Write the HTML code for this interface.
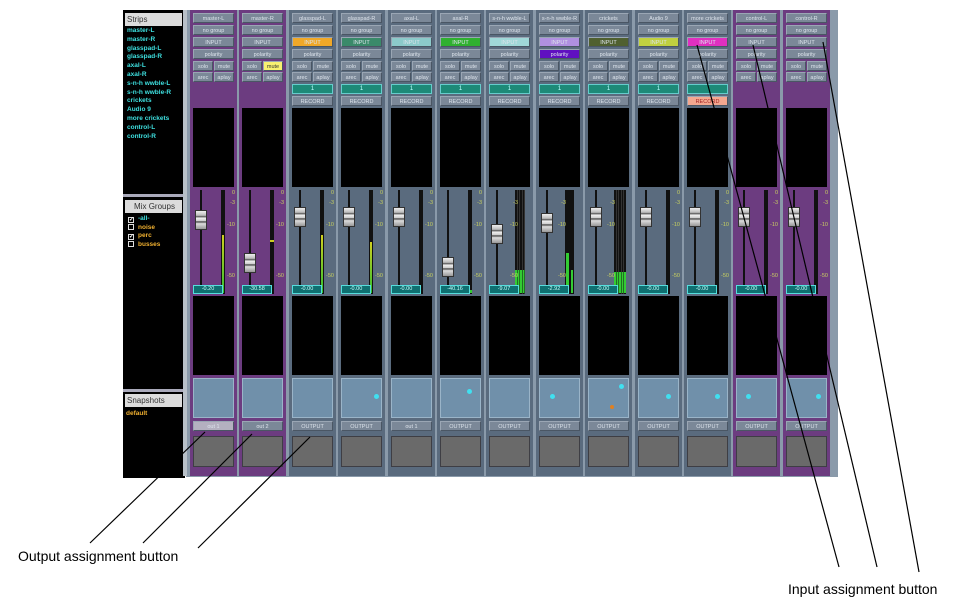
<!DOCTYPE html>
<html><head><meta charset="utf-8"><style>
*{margin:0;padding:0;box-sizing:border-box}
body{width:960px;height:613px;background:#fff;position:relative;overflow:hidden;font-family:"Liberation Sans",sans-serif}
.a{position:absolute}
#mix{left:186px;top:10px;width:652px;height:467px;background:#8a9aaa}
.s{position:absolute;top:10px;width:47px;height:466px;background:#5a6b7e}
.s.p{background:#6c3c80}
.s>div{position:absolute}
.b{left:3px;width:41px;height:10px;background:#7b8898;color:#dde4ec;font-size:5.5px;line-height:10px;text-align:center;border:1px solid #9aa6b4;border-right-color:#4a5664;border-bottom-color:#4a5664;white-space:nowrap;overflow:hidden}
.h{width:20px}
.r{left:24px}
.tl{left:3px;width:41px;height:10px;background:#1d8a78;border:1px solid #6cc;color:#bff;font-size:6px;text-align:center;line-height:8px}
.bk{left:3px;width:41px;background:#000}
.pan{left:3px;top:368px;width:41px;height:40px;background:#7090aa;border:1px solid #9ab4c8}
.gb{left:3px;top:426px;width:41px;height:31px;background:#6a6a6a;border:1px solid #3e3e44}
.trk{left:10px;top:180px;width:2px;height:100px;background:#111}
.knob{left:5px;width:12px;height:20px;background:linear-gradient(#eee,#bbb 25%,#555 30%,#eee 40%,#ccc 55%,#444 60%,#ddd 70%,#999);border:1px solid #333}
.mt{left:31px;top:180px;width:4px;height:104px;background:#111}
.sc{left:33px;font-size:5.5px;color:#c8d060;width:12px;text-align:right}
.val{left:3px;top:275px;width:30px;height:9px;background:#0f6f70;border:1px solid #5dd;color:#cff;font-size:5.5px;line-height:7px;text-align:center}
.dot{width:5px;height:5px;border-radius:50%;background:#40e0f0}
#left{left:123px;top:10px;width:62px;height:468px;background:#000}
.hd{position:absolute;left:2px;width:57px;height:13px;background:#dcdcdc;color:#333;font-size:8px;line-height:13px;padding-left:2px}
.st{position:absolute;left:4px;color:#3ee0e0;font-size:6.5px;font-weight:bold;line-height:8.8px}
.mg{position:absolute;left:5px;font-size:6.5px;font-weight:bold;line-height:8.6px}
.cb{display:inline-block;width:6px;height:6px;border:1px solid #ddd;margin-right:4px;vertical-align:-1px;font-size:6px;color:#fff;line-height:4px}
</style></head><body>
<div id="mix" class="a"></div>

<!-- strips -->
<div class="s p" style="left:190px">
<div class="b" style="top:3px">master-L</div><div class="b" style="top:15px">no group</div><div class="b" style="top:27px">INPUT</div><div class="b" style="top:39px">polarity</div>
<div class="b h" style="top:51px">solo</div><div class="b h r" style="top:51px">mute</div><div class="b h" style="top:62px">arec</div><div class="b h r" style="top:62px">aplay</div>
<div class="bk" style="top:98px;height:79px"></div>
<div class="trk"></div><div class="mt"></div><div class="a" style="left:32px;top:225px;width:2px;height:58px;background:linear-gradient(#d0d020,#30c030)"></div><div class="knob" style="top:200px"></div>
<div class="sc" style="top:180px">0</div><div class="sc" style="top:190px">-3</div><div class="sc" style="top:212px">-10</div><div class="sc" style="top:263px">-50</div>
<div class="val">-0.20</div>
<div class="bk" style="top:286px;height:79px"></div><div class="pan"></div>
<div class="b" style="top:411px;background:#b4b0c0">out 1</div><div class="gb"></div></div>

<div class="s p" style="left:239px">
<div class="b" style="top:3px">master-R</div><div class="b" style="top:15px">no group</div><div class="b" style="top:27px">INPUT</div><div class="b" style="top:39px">polarity</div>
<div class="b h" style="top:51px">solo</div><div class="b h r" style="top:51px;background:#f8f070;color:#333">mute</div><div class="b h" style="top:62px">arec</div><div class="b h r" style="top:62px">aplay</div>
<div class="bk" style="top:98px;height:79px"></div>
<div class="trk"></div><div class="mt"></div><div class="a" style="left:31px;top:230px;width:4px;height:2px;background:#cc2"></div><div class="knob" style="top:243px"></div>
<div class="sc" style="top:180px">0</div><div class="sc" style="top:190px">-3</div><div class="sc" style="top:212px">-10</div><div class="sc" style="top:263px">-50</div>
<div class="val">-30.58</div>
<div class="bk" style="top:286px;height:79px"></div><div class="pan"></div>
<div class="b" style="top:411px">out 2</div><div class="gb"></div></div>

<div class="s" style="left:289px">
<div class="b" style="top:3px">glasspad-L</div><div class="b" style="top:15px">no group</div><div class="b" style="top:27px;background:#f0a828">INPUT</div><div class="b" style="top:39px">polarity</div>
<div class="b h" style="top:51px">solo</div><div class="b h r" style="top:51px">mute</div><div class="b h" style="top:62px">arec</div><div class="b h r" style="top:62px">aplay</div>
<div class="tl" style="top:74px">1</div><div class="b" style="top:86px">RECORD</div>
<div class="bk" style="top:98px;height:79px"></div>
<div class="trk"></div><div class="mt"></div><div class="a" style="left:32px;top:225px;width:2px;height:58px;background:linear-gradient(#d0d020,#30c030)"></div><div class="knob" style="top:197px"></div>
<div class="sc" style="top:180px">0</div><div class="sc" style="top:190px">-3</div><div class="sc" style="top:212px">-10</div><div class="sc" style="top:263px">-50</div>
<div class="val">-0.00</div>
<div class="bk" style="top:286px;height:79px"></div><div class="pan"></div>
<div class="b" style="top:411px">OUTPUT</div><div class="gb"></div></div>

<div class="s" style="left:338px">
<div class="b" style="top:3px">glasspad-R</div><div class="b" style="top:15px">no group</div><div class="b" style="top:27px;background:#3a8a6a">INPUT</div><div class="b" style="top:39px">polarity</div>
<div class="b h" style="top:51px">solo</div><div class="b h r" style="top:51px">mute</div><div class="b h" style="top:62px">arec</div><div class="b h r" style="top:62px">aplay</div>
<div class="tl" style="top:74px">1</div><div class="b" style="top:86px">RECORD</div>
<div class="bk" style="top:98px;height:79px"></div>
<div class="trk"></div><div class="mt"></div><div class="a" style="left:32px;top:232px;width:2px;height:51px;background:linear-gradient(#d0d020,#30c030)"></div><div class="knob" style="top:197px"></div>
<div class="sc" style="top:180px">0</div><div class="sc" style="top:190px">-3</div><div class="sc" style="top:212px">-10</div><div class="sc" style="top:263px">-50</div>
<div class="val">-0.00</div>
<div class="bk" style="top:286px;height:79px"></div><div class="pan"><div class="a dot" style="left:32px;top:15px"></div></div>
<div class="b" style="top:411px">OUTPUT</div><div class="gb"></div></div>

<div class="s" style="left:388px">
<div class="b" style="top:3px">axal-L</div><div class="b" style="top:15px">no group</div><div class="b" style="top:27px;background:#8ccaca">INPUT</div><div class="b" style="top:39px">polarity</div>
<div class="b h" style="top:51px">solo</div><div class="b h r" style="top:51px">mute</div><div class="b h" style="top:62px">arec</div><div class="b h r" style="top:62px">aplay</div>
<div class="tl" style="top:74px">1</div><div class="b" style="top:86px">RECORD</div>
<div class="bk" style="top:98px;height:79px"></div>
<div class="trk"></div><div class="mt"></div><div class="knob" style="top:197px"></div>
<div class="sc" style="top:180px">0</div><div class="sc" style="top:190px">-3</div><div class="sc" style="top:212px">-10</div><div class="sc" style="top:263px">-50</div>
<div class="val">-0.00</div>
<div class="bk" style="top:286px;height:79px"></div><div class="pan"></div>
<div class="b" style="top:411px">out 1</div><div class="gb"></div></div>

<div class="s" style="left:437px">
<div class="b" style="top:3px">axal-R</div><div class="b" style="top:15px">no group</div><div class="b" style="top:27px;background:#30b030">INPUT</div><div class="b" style="top:39px">polarity</div>
<div class="b h" style="top:51px">solo</div><div class="b h r" style="top:51px">mute</div><div class="b h" style="top:62px">arec</div><div class="b h r" style="top:62px">aplay</div>
<div class="tl" style="top:74px">1</div><div class="b" style="top:86px">RECORD</div>
<div class="bk" style="top:98px;height:79px"></div>
<div class="trk"></div><div class="mt"></div><div class="a" style="left:31px;top:280px;width:4px;height:3px;background:#3c3"></div><div class="knob" style="top:247px"></div>
<div class="sc" style="top:180px">0</div><div class="sc" style="top:190px">-3</div><div class="sc" style="top:212px">-10</div><div class="sc" style="top:263px">-50</div>
<div class="val">-40.16</div>
<div class="bk" style="top:286px;height:79px"></div><div class="pan"><div class="a dot" style="left:26px;top:10px"></div><div class="a dot" style="left:60px;top:23px"></div></div>
<div class="b" style="top:411px">OUTPUT</div><div class="gb"></div></div>

<div class="s" style="left:486px">
<div class="b" style="top:3px">s-n-h wwble-L</div><div class="b" style="top:15px">no group</div><div class="b" style="top:27px;background:#a0d8d8">INPUT</div><div class="b" style="top:39px">polarity</div>
<div class="b h" style="top:51px">solo</div><div class="b h r" style="top:51px">mute</div><div class="b h" style="top:62px">arec</div><div class="b h r" style="top:62px">aplay</div>
<div class="tl" style="top:74px">1</div><div class="b" style="top:86px">RECORD</div>
<div class="bk" style="top:98px;height:79px"></div>
<div class="trk"></div><div class="a" style="left:29px;top:180px;width:10px;height:104px;background:repeating-linear-gradient(90deg,#111 0 2px,#555 2px 2.5px)"></div><div class="a" style="left:29px;top:260px;width:10px;height:23px;background:repeating-linear-gradient(90deg,#3c3 0 2px,#111 2px 2.5px)"></div><div class="knob" style="top:214px"></div>
<div class="sc" style="top:190px;left:20px">-3</div><div class="sc" style="top:212px;left:20px">-10</div><div class="sc" style="top:263px;left:20px">-50</div>
<div class="val">-9.07</div>
<div class="bk" style="top:286px;height:79px"></div><div class="pan"></div>
<div class="b" style="top:411px">OUTPUT</div><div class="gb"></div></div>

<div class="s" style="left:536px">
<div class="b" style="top:3px">s-n-h wwble-R</div><div class="b" style="top:15px">no group</div><div class="b" style="top:27px;background:#b090e0">INPUT</div><div class="b" style="top:39px;background:#6010c0">polarity</div>
<div class="b h" style="top:51px">solo</div><div class="b h r" style="top:51px">mute</div><div class="b h" style="top:62px">arec</div><div class="b h r" style="top:62px">aplay</div>
<div class="tl" style="top:74px">1</div><div class="b" style="top:86px">RECORD</div>
<div class="bk" style="top:98px;height:79px"></div>
<div class="trk"></div><div class="mt" style="width:9px;left:29px"></div><div class="a" style="left:30px;top:243px;width:3px;height:40px;background:#3c3"></div><div class="a" style="left:35px;top:260px;width:2px;height:23px;background:#3c3"></div><div class="knob" style="top:203px"></div>
<div class="sc" style="top:190px;left:18px">-3</div><div class="sc" style="top:212px;left:18px">-10</div><div class="sc" style="top:263px;left:18px">-50</div>
<div class="val">-2.92</div>
<div class="bk" style="top:286px;height:79px"></div><div class="pan"><div class="a dot" style="left:10px;top:15px"></div></div>
<div class="b" style="top:411px">OUTPUT</div><div class="gb"></div></div>

<div class="s" style="left:585px">
<div class="b" style="top:3px">crickets</div><div class="b" style="top:15px">no group</div><div class="b" style="top:27px;background:#506030">INPUT</div><div class="b" style="top:39px">polarity</div>
<div class="b h" style="top:51px">solo</div><div class="b h r" style="top:51px">mute</div><div class="b h" style="top:62px">arec</div><div class="b h r" style="top:62px">aplay</div>
<div class="tl" style="top:74px">1</div><div class="b" style="top:86px">RECORD</div>
<div class="bk" style="top:98px;height:79px"></div>
<div class="trk"></div><div class="a" style="left:29px;top:180px;width:12px;height:104px;background:repeating-linear-gradient(90deg,#111 0 2px,#555 2px 2.5px)"></div><div class="a" style="left:29px;top:262px;width:12px;height:21px;background:repeating-linear-gradient(90deg,#3c3 0 2px,#111 2px 2.5px)"></div><div class="knob" style="top:197px"></div>
<div class="sc" style="top:190px;left:18px">-3</div><div class="sc" style="top:212px;left:18px">-10</div><div class="sc" style="top:263px;left:18px">-50</div>
<div class="val">-0.00</div>
<div class="bk" style="top:286px;height:79px"></div><div class="pan"><div class="a dot" style="left:30px;top:5px"></div><div class="a dot" style="left:21px;top:26px;background:#e08020;width:4px;height:4px"></div></div>
<div class="b" style="top:411px">OUTPUT</div><div class="gb"></div></div>

<div class="s" style="left:635px">
<div class="b" style="top:3px">Audio 9</div><div class="b" style="top:15px">no group</div><div class="b" style="top:27px;background:#c0d040">INPUT</div><div class="b" style="top:39px">polarity</div>
<div class="b h" style="top:51px">solo</div><div class="b h r" style="top:51px">mute</div><div class="b h" style="top:62px">arec</div><div class="b h r" style="top:62px">aplay</div>
<div class="tl" style="top:74px">1</div><div class="b" style="top:86px">RECORD</div>
<div class="bk" style="top:98px;height:79px"></div>
<div class="trk"></div><div class="mt"></div><div class="knob" style="top:197px"></div>
<div class="sc" style="top:180px">0</div><div class="sc" style="top:190px">-3</div><div class="sc" style="top:212px">-10</div><div class="sc" style="top:263px">-50</div>
<div class="val">-0.00</div>
<div class="bk" style="top:286px;height:79px"></div><div class="pan"><div class="a dot" style="left:27px;top:15px"></div></div>
<div class="b" style="top:411px">OUTPUT</div><div class="gb"></div></div>

<div class="s" style="left:684px">
<div class="b" style="top:3px">more crickets</div><div class="b" style="top:15px">no group</div><div class="b" style="top:27px;background:#e030c0">INPUT</div><div class="b" style="top:39px">polarity</div>
<div class="b h" style="top:51px">solo</div><div class="b h r" style="top:51px">mute</div><div class="b h" style="top:62px">arec</div><div class="b h r" style="top:62px">aplay</div>
<div class="tl" style="top:74px"></div><div class="b" style="top:86px;background:#f4a890;color:#a02020">RECORD</div>
<div class="bk" style="top:98px;height:79px"></div>
<div class="trk"></div><div class="mt"></div><div class="knob" style="top:197px"></div>
<div class="sc" style="top:180px">0</div><div class="sc" style="top:190px">-3</div><div class="sc" style="top:212px">-10</div><div class="sc" style="top:263px">-50</div>
<div class="val">-0.00</div>
<div class="bk" style="top:286px;height:79px"></div><div class="pan"><div class="a dot" style="left:27px;top:15px"></div></div>
<div class="b" style="top:411px">OUTPUT</div><div class="gb"></div></div>

<div class="s p" style="left:733px">
<div class="b" style="top:3px">control-L</div><div class="b" style="top:15px">no group</div><div class="b" style="top:27px">INPUT</div><div class="b" style="top:39px">polarity</div>
<div class="b h" style="top:51px">solo</div><div class="b h r" style="top:51px">mute</div><div class="b h" style="top:62px">arec</div><div class="b h r" style="top:62px">aplay</div>
<div class="bk" style="top:98px;height:79px"></div>
<div class="trk"></div><div class="mt"></div><div class="knob" style="top:197px"></div>
<div class="sc" style="top:180px">0</div><div class="sc" style="top:190px">-3</div><div class="sc" style="top:212px">-10</div><div class="sc" style="top:263px">-50</div>
<div class="val">-0.00</div>
<div class="bk" style="top:286px;height:79px"></div><div class="pan"><div class="a dot" style="left:9px;top:15px"></div></div>
<div class="b" style="top:411px">OUTPUT</div><div class="gb"></div></div>

<div class="s p" style="left:783px">
<div class="b" style="top:3px">control-R</div><div class="b" style="top:15px">no group</div><div class="b" style="top:27px">INPUT</div><div class="b" style="top:39px">polarity</div>
<div class="b h" style="top:51px">solo</div><div class="b h r" style="top:51px">mute</div><div class="b h" style="top:62px">arec</div><div class="b h r" style="top:62px">aplay</div>
<div class="bk" style="top:98px;height:79px"></div>
<div class="trk"></div><div class="mt"></div><div class="knob" style="top:197px"></div>
<div class="sc" style="top:180px">0</div><div class="sc" style="top:190px">-3</div><div class="sc" style="top:212px">-10</div><div class="sc" style="top:263px">-50</div>
<div class="val">-0.00</div>
<div class="bk" style="top:286px;height:79px"></div><div class="pan"><div class="a dot" style="left:29px;top:15px"></div></div>
<div class="b" style="top:411px">OUTPUT</div><div class="gb"></div></div>

<!-- left panel -->
<div id="left" class="a">
<div class="hd" style="top:3px">Strips</div>
<div class="st" style="top:17px">master-L<br>master-R<br>glasspad-L<br>glasspad-R<br>axal-L<br>axal-R<br>s-n-h wwble-L<br>s-n-h wwble-R<br>crickets<br>Audio 9<br>more crickets<br>control-L<br>control-R</div>
<div class="a" style="left:0;top:184px;width:62px;height:3px;background:#aab"></div>
<div class="hd" style="top:190px;text-align:center">Mix Groups</div>
<div class="mg" style="top:205px"><span class="cb">✓</span><span style="color:#3ee0e0">-all-</span><br><span class="cb"></span><span style="color:#f0b030">noise</span><br><span class="cb">✓</span><span style="color:#f0b030">perc</span><br><span class="cb"></span><span style="color:#f0b030">busses</span></div>
<div class="a" style="left:0;top:379px;width:62px;height:3px;background:#aab"></div>
<div class="hd" style="top:384px">Snapshots</div>
<div class="mg" style="top:400px;left:3px;color:#f0b030">default</div>
</div>
<div class="a" style="left:183px;top:10px;width:4px;height:466px;background:#b8c0c8"></div>

<svg class="a" style="left:0;top:0" width="960" height="613">
<g stroke="#000" stroke-width="1.2">
<line x1="90" y1="543" x2="205" y2="432"/>
<line x1="143" y1="543" x2="252" y2="434"/>
<line x1="198" y1="548" x2="310" y2="437"/>
<line x1="839" y1="567" x2="697" y2="45"/>
<line x1="877" y1="567" x2="753" y2="45"/>
<line x1="919" y1="572" x2="823" y2="42"/>
</g>
<text x="18" y="561" font-family="Liberation Sans, sans-serif" font-size="14" fill="#000">Output assignment button</text>
<text x="788" y="594" font-family="Liberation Sans, sans-serif" font-size="14" fill="#000">Input assignment button</text>
</svg>
</body></html>
